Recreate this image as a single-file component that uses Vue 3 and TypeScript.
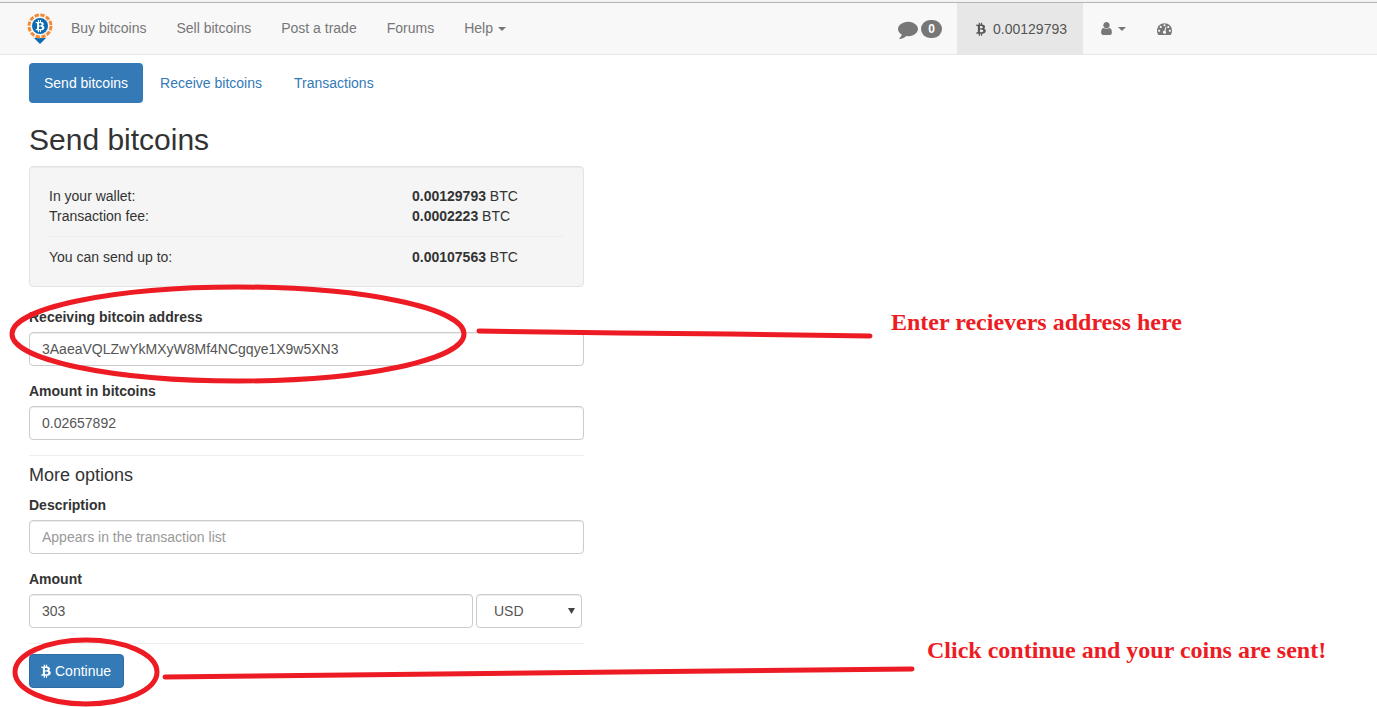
<script setup lang="ts">
import { ref } from 'vue'

const navLinks: string[] = ['Buy bitcoins', 'Sell bitcoins', 'Post a trade', 'Forums']
const tabs: string[] = ['Send bitcoins', 'Receive bitcoins', 'Transactions']
const activeTab = ref('Send bitcoins')

const address = ref('3AaeaVQLZwYkMXyW8Mf4NCgqye1X9w5XN3')
const amountBtc = ref('0.02657892')
const description = ref('')
const amountFiat = ref('303')
const currency = ref('USD')

const bitcoinPath =
  'M1408 595q18 182-131 258 117 28 175 103t45 214q-7 71-32.5 125t-64.5 89-97 58.5-121.5 34.5-145.5 15v255h-154v-251q-80 0-122-1v252h-154v-255q-18 0-54-.5t-55-.5h-200l31-183h111q50 0 58-51v-402h16q-6-1-16-1v-287q-13-68-89-68h-111v-164l212 1q64 0 97-1v-252h154v247q82-2 122-2v-245h154v252q79 7 140 22.5t113 45 82.5 78 36.5 114.5zm-215 545q0-36-15-64t-37-46-57.5-30.5-65.5-18.5-74-9-69-3-64.5 1-47.5 1v338q8 0 37 .5t48 .5 53-1.5 58.5-4 57-8.5 55.5-14 47.5-21 39.5-30 24.5-40 9.5-51zm-71-476q0-33-12.5-58.5t-30.5-42-48-28-55-16.5-61.5-8-58-2.5-54 1-39.5.5v307q5 0 34.5.5t46.5 0 50-2 55-5.500 51.5-11 48.5-18.5 37-27 27-38.5 9-51z'
</script>

<template>
  <div class="page">
    <header class="navbar">
      <div class="navbar-inner">
        <a class="brand" href="#" aria-label="Home">
          <svg width="26" height="32" viewBox="0 0 26 32">
            <path d="M7 25h12l-6 6z" fill="#0a6cb5" />
            <circle cx="13" cy="13" r="12" fill="#f8f8f8" />
            <circle cx="13" cy="13" r="11" fill="none" stroke="#f58a33" stroke-width="3" stroke-dasharray="4.3 1.46" />
            <circle cx="13" cy="13" r="8" fill="#0a6cb5" />
            <svg x="6.500" y="6.500" width="13" height="13" viewBox="0 0 1792 1792"><path :d="bitcoinPath" fill="#fff" /></svg>
          </svg>
        </a>
        <nav class="nav-left">
          <a v-for="link in navLinks" :key="link" href="#">{{ link }}</a>
          <a href="#">Help<span class="caret"></span></a>
        </nav>
        <nav class="nav-right">
          <a class="messages" href="#" aria-label="Messages">
            <svg width="20" height="20" viewBox="0 0 1792 1792"><path d="M1792 896q0 174-120 321.5t-326 233-450 85.5q-70 0-145-8-198 175-460 242-49 14-114 22-17 2-30.5-9t-17.5-29v-1q-3-4-.5-12t2-10 4.5-9.5l6-9 7-8.5 8-9q7-8 31-34.5t34.5-38 31-39.5 32.5-51 27-59 26-76q-157-89-247.5-220t-90.5-281q0-130 71-248.5t191-204.5 286-136.5 348-50.5q244 0 450 85.5t326 233 120 321.5z" /></svg>
            <span class="badge">0</span>
          </a>
          <a class="balance" href="#">
            <svg width="14" height="14" viewBox="0 0 1792 1792"><path :d="bitcoinPath" /></svg>
            <span>0.00129793</span>
          </a>
          <a class="account" href="#" aria-label="Account">
            <svg width="15" height="15" viewBox="0 0 1792 1792"><path d="M1536 1399q0 109-62.5 187t-150.5 78h-854q-88 0-150.5-78t-62.5-187q0-85 8.5-160.5t31.5-152 58.5-131 94-89 134.5-34.5q131 128 313 128t313-128q76 0 134.5 34.5t94 89 58.5 131 31.5 152 8.5 160.5zm-256-887q0 159-112.5 271.5t-271.5 112.5-271.5-112.5-112.5-271.5 112.5-271.5 271.5-112.5 271.5 112.5 112.5 271.5z" /></svg>
            <span class="caret"></span>
          </a>
          <a class="dashboard" href="#" aria-label="Dashboard">
            <svg width="15" height="15" viewBox="0 0 1792 1792"><path d="M384 1152q0-53-37.5-90.5t-90.5-37.5-90.5 37.5-37.5 90.5 37.5 90.5 90.5 37.5 90.5-37.5 37.5-90.5zm192-448q0-53-37.5-90.5t-90.5-37.5-90.5 37.5-37.5 90.5 37.5 90.5 90.5 37.5 90.5-37.5 37.5-90.5zm428 481l101-382q6-26-7.5-48.5t-38.5-29.5-48 6.5-30 39.5l-101 382q-60 5-107 43.5t-63 98.5q-20 77 20 146t117 89 146-20 89-117q16-60-6-117t-72-91zm660-33q0-53-37.5-90.5t-90.5-37.5-90.5 37.5-37.5 90.5 37.5 90.5 90.5 37.5 90.5-37.5 37.5-90.5zm-640-640q0-53-37.5-90.5t-90.5-37.5-90.5 37.5-37.5 90.5 37.5 90.5 90.5 37.5 90.5-37.5 37.5-90.5zm448 192q0-53-37.5-90.5t-90.5-37.5-90.5 37.5-37.5 90.5 37.5 90.5 90.5 37.5 90.5-37.5 37.5-90.5zm320 448q0 261-141 483-19 29-54 29h-1402q-35 0-54-29-141-221-141-483 0-182 71-348t191-286 286-191 348-71 348 71 286 191 191 286 71 348z" /></svg>
          </a>
        </nav>
      </div>
    </header>

    <main class="container">
      <nav class="pills">
        <a
          v-for="tab in tabs"
          :key="tab"
          href="#"
          :class="{ active: tab === activeTab }"
          @click.prevent="activeTab = tab"
        >{{ tab }}</a>
      </nav>

      <form class="column" @submit.prevent>
        <h1>Send bitcoins</h1>

        <div class="well">
          <dl>
            <dt>In your wallet:</dt>
            <dd><strong>0.00129793</strong> BTC</dd>
            <dt>Transaction fee:</dt>
            <dd><strong>0.0002223</strong> BTC</dd>
          </dl>
          <hr />
          <dl>
            <dt>You can send up to:</dt>
            <dd><strong>0.00107563</strong> BTC</dd>
          </dl>
        </div>

        <div class="group">
          <label for="address">Receiving bitcoin address</label>
          <input id="address" v-model="address" class="control" type="text" spellcheck="false" />
        </div>
        <div class="group">
          <label for="amount-btc">Amount in bitcoins</label>
          <input id="amount-btc" v-model="amountBtc" class="control" type="text" />
        </div>

        <hr />
        <h2>More options</h2>

        <div class="group">
          <label for="description">Description</label>
          <input id="description" v-model="description" class="control" type="text" placeholder="Appears in the transaction list" />
        </div>
        <div class="group">
          <label for="amount-fiat">Amount</label>
          <div class="amount-row">
            <input id="amount-fiat" v-model="amountFiat" class="control" type="text" />
            <div class="select-wrap">
              <select id="currency" v-model="currency" class="control" aria-label="Currency">
                <option>USD</option>
                <option>EUR</option>
                <option>GBP</option>
              </select>
              <svg class="select-arrow" width="7" height="6" viewBox="0 0 7 6"><path d="M0 0h7L3.5 6z" fill="#444" /></svg>
            </div>
          </div>
        </div>

        <hr />
        <button class="submit" type="submit">
          <svg width="14" height="14" viewBox="0 0 1792 1792"><path :d="bitcoinPath" /></svg>Continue
        </button>
      </form>
    </main>

    <svg class="marks" width="1000" height="707" viewBox="0 0 1000 707" aria-hidden="true">
      <ellipse cx="238" cy="334" rx="226" ry="47" />
      <path d="M479 331L620 333L730 334L870 336" />
      <ellipse cx="86" cy="672" rx="71" ry="32" />
      <path d="M165 677L440 674L620 672L912 669" />
    </svg>
    <p class="note note-address">Enter recievers address here</p>
    <p class="note note-continue">Click continue and your coins are sent!</p>
  </div>
</template>

<style>
body {
  background: #fff;
}
</style>

<style scoped>
.page,
.page * {
  box-sizing: border-box;
}
.page {
  position: relative;
  overflow: hidden;
  padding-bottom: 19px;
  font-family: "Liberation Sans", Arial, sans-serif;
  font-size: 14px;
  line-height: 20px;
  color: #333;
}
a {
  color: #337ab7;
  text-decoration: none;
}
svg {
  fill: currentColor;
  flex: none;
}
.navbar {
  background: #f8f8f8;
  border-bottom: 1px solid #e7e7e7;
}
.navbar::before {
  content: "";
  display: block;
  height: 2px;
  background: #f3f3f3;
  border-bottom: 1px solid #b4b4b4;
}
.navbar-inner {
  display: flex;
  max-width: 1173px;
  margin-left: 14px;
}
.brand {
  display: flex;
  width: 42px;
  padding: 10px 0 0 13px;
}
.nav-left,
.nav-right {
  display: flex;
}
.nav-left a {
  padding: 15px;
  color: #777;
}
.nav-right {
  margin-left: auto;
}
.nav-right a {
  display: flex;
  align-items: center;
  height: 51px;
  padding: 0 15px;
  color: #777;
}
.caret {
  display: inline-block;
  margin-left: 5px;
  vertical-align: middle;
  border-top: 4px solid;
  border-right: 4px solid transparent;
  border-left: 4px solid transparent;
}
.badge {
  min-width: 21px;
  margin-left: 3px;
  padding: 3px 7px;
  border-radius: 10px;
  background: #777;
  color: #fff;
  font-size: 12px;
  font-weight: bold;
  line-height: 12px;
  text-align: center;
}
.nav-right .balance {
  gap: 5px;
  padding: 0 16px 0 17px;
  background: #e7e7e7;
  color: #555;
}
.nav-right .account {
  gap: 4px;
  padding: 0 16px;
}
.account .caret {
  margin-left: 0;
}
.container {
  max-width: 1200px;
  margin-left: 14px;
  padding: 8px 15px 0;
}
.pills {
  display: flex;
  gap: 2px;
}
.pills a {
  padding: 10px 15px;
  border-radius: 4px;
}
.pills a.active {
  background: #337ab7;
  color: #fff;
}
.column {
  max-width: 555px;
}
h1,
h2 {
  font-weight: normal;
}
h1 {
  margin: 20px 0 10px;
  font-size: 30px;
  line-height: 33px;
}
h2 {
  margin: 0 0 11px;
  font-size: 18px;
  line-height: 18px;
}
.well {
  margin-bottom: 20px;
  padding: 19px;
  border: 1px solid #e3e3e3;
  border-radius: 4px;
  background: #f5f5f5;
  box-shadow: inset 0 1px 1px rgba(0, 0, 0, 0.05);
}
dl {
  display: grid;
  grid-template-columns: 363px 1fr;
  margin: 0;
}
dd {
  margin: 0;
}
hr {
  height: 1px;
  margin: 0 0 10px;
  border: 0;
  background: #eee;
}
.well hr {
  margin-top: 10px;
}
.group {
  margin-bottom: 15px;
}
label {
  display: block;
  margin-bottom: 5px;
  font-weight: bold;
}
.control {
  display: block;
  width: 100%;
  height: 34px;
  padding: 6px 12px;
  border: 1px solid #ccc;
  border-radius: 4px;
  background: #fff;
  box-shadow: inset 0 1px 1px rgba(0, 0, 0, 0.075);
  color: #555;
  font: inherit;
}
.control::placeholder {
  color: #999;
  opacity: 1;
}
.amount-row {
  display: grid;
  grid-template-columns: 1fr 106px;
  gap: 3px;
  padding-right: 2px;
}
.select-wrap {
  position: relative;
}
select.control {
  appearance: none;
  padding-left: 17px;
}
.select-arrow {
  position: absolute;
  top: 14px;
  right: 7px;
  pointer-events: none;
}
.submit {
  display: flex;
  align-items: center;
  gap: 2px;
  height: 34px;
  padding: 0 12px 0 9px;
  border: 1px solid #2e6da4;
  border-radius: 4px;
  background: #337ab7;
  color: #fff;
  font: inherit;
}
.marks {
  position: absolute;
  top: 0;
  left: 0;
  fill: none;
  stroke: #ed1c24;
  stroke-width: 5;
  stroke-linecap: round;
  pointer-events: none;
}
.note {
  position: absolute;
  margin: 0;
  color: #ed1c24;
  font-family: "Liberation Serif", "Times New Roman", serif;
  font-size: 24px;
  font-weight: bold;
  line-height: 28px;
  white-space: nowrap;
}
.note-address {
  top: 308px;
  left: 891px;
}
.note-continue {
  top: 636px;
  left: 927px;
}
</style>
